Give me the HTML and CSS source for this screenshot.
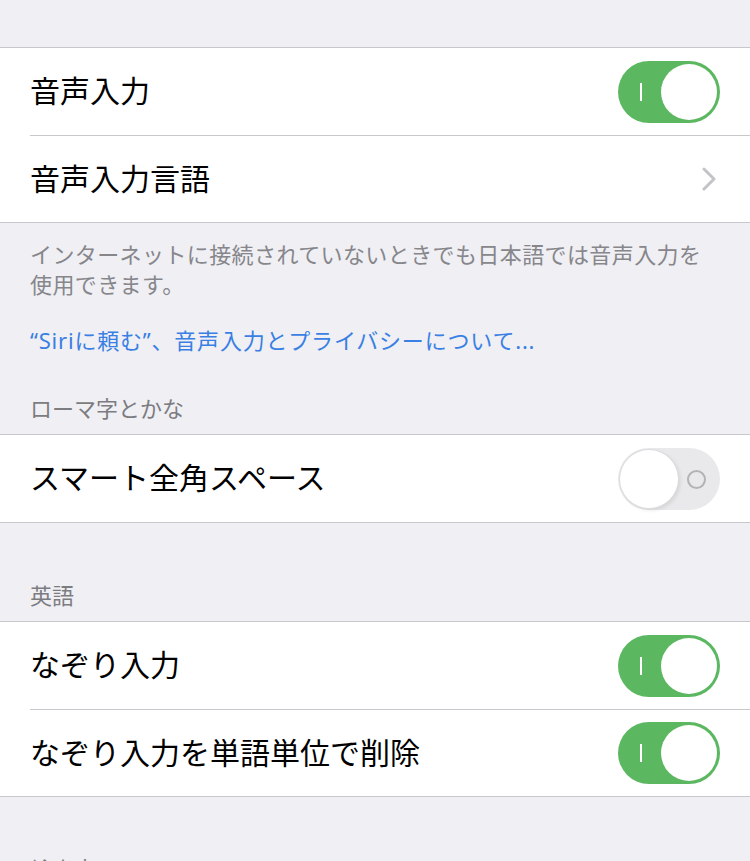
FILE: index.html
```html
<!DOCTYPE html>
<html lang="ja">
<head>
    <meta charset="UTF-8">
    <meta name="viewport" content="width=device-width, initial-scale=1.0">
    <title>音声入力</title>
    <link rel="stylesheet" href="styles.css">
</head>
<body>
    <div class="settings">
        <div class="spacer"></div>

        <div class="group">
            <div class="row">
                <span class="label">音声入力</span>
                <span class="switch on"><span class="mark"></span><span class="knob"></span></span>
            </div>
            <div class="row">
                <span class="label">音声入力言語</span>
                <svg class="chevron" width="14" height="24" viewBox="0 0 14 24">
                    <polyline points="2,2 12,12 2,22" fill="none" stroke="#c4c4c8" stroke-width="3" stroke-linecap="round" stroke-linejoin="round"/>
                </svg>
            </div>
        </div>

        <div class="footer">
            <p class="note">インターネットに接続されていないときでも日本語では音声入力を使用できます。</p>
            <a class="link" href="#">“Siriに頼む”、音声入力とプライバシーについて...</a>
        </div>

        <div class="header first">ローマ字とかな</div>
        <div class="group">
            <div class="row">
                <span class="label">スマート全角スペース</span>
                <span class="switch off"><span class="knob"></span><span class="mark"></span></span>
            </div>
        </div>

        <div class="header">英語</div>
        <div class="group">
            <div class="row">
                <span class="label">なぞり入力</span>
                <span class="switch on"><span class="mark"></span><span class="knob"></span></span>
            </div>
            <div class="row">
                <span class="label">なぞり入力を単語単位で削除</span>
                <span class="switch on"><span class="mark"></span><span class="knob"></span></span>
            </div>
        </div>

        <div class="header">絵文字</div>
    </div>
</body>
</html>
```

FILE: styles.css
```css
* {
    box-sizing: border-box;
}

body {
    margin: 0;
    background-color: #efeff4;
    font-family: "Noto Sans CJK JP", sans-serif;
    overflow: hidden;
}

.spacer {
    height: 47px;
}

.group {
    background-color: #fff;
    border-top: 1px solid #c8c7cc;
    border-bottom: 1px solid #c8c7cc;
}

.row {
    display: flex;
    align-items: center;
    justify-content: space-between;
    height: 87px;
    margin-left: 30px;
    padding-right: 30px;
}

.row + .row {
    border-top: 1px solid #c8c7cc;
}

.label {
    font-size: 30px;
    line-height: 1;
    margin-bottom: 5px;
    color: #000;
}

.chevron {
    margin-right: 4px;
}

/* スイッチ */
.switch {
    position: relative;
    display: flex;
    align-items: center;
    width: 102px;
    height: 62px;
    border-radius: 31px;
}

.switch.on {
    background-color: #5cb761;
}

.switch.off {
    background-color: #e9e9eb;
}

.knob {
    position: absolute;
    top: 3px;
    width: 56px;
    height: 56px;
    border-radius: 50%;
    background-color: #fff;
}

.on .knob {
    right: 3px;
}

.off .knob {
    left: 2px;
    width: 58px;
    height: 58px;
    top: 2px;
    box-shadow: 0 0 0 1px #dcdcdf, 2px 2px 4px rgba(0,0,0,0.1);
}

.on .mark {
    position: absolute;
    left: 22px;
    top: 22px;
    width: 2px;
    height: 18px;
    background-color: #fff;
}

.off .mark {
    position: absolute;
    left: 69px;
    top: 22px;
    width: 19px;
    height: 19px;
    border: 2px solid #b3b3b6;
    border-radius: 50%;
}

/* フッター・ヘッダー */
.footer {
    padding: 15px 30px 0;
}

.note {
    margin: 0;
    font-size: 22px;
    line-height: 30px;
    letter-spacing: 0.4px;
    color: #86868b;
}

.link {
    display: block;
    margin-top: 27px;
    font-family: "Noto Sans", "Noto Sans CJK JP", sans-serif;
    font-size: 22px;
    line-height: 30px;
    letter-spacing: 0.8px;
    color: #3a7fe3;
    text-decoration: none;
}

.header {
    padding: 56px 30px 12px;
    font-size: 22px;
    line-height: 30px;
    color: #7c7c81;
}

.header.first {
    padding-top: 37px;
}
```
